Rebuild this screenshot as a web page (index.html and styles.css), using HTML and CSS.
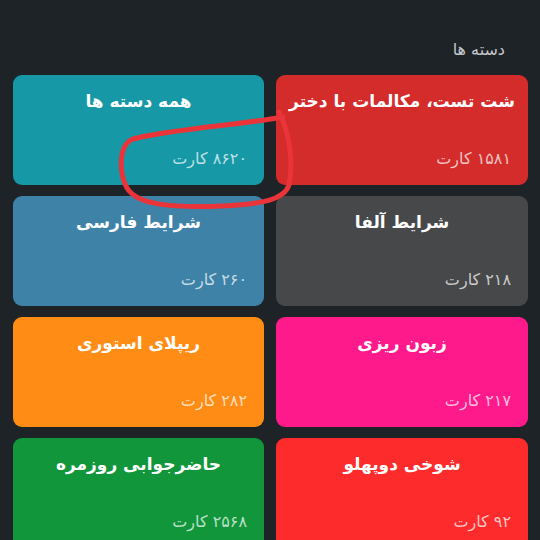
FILE: index.html
```html
<!DOCTYPE html>
<html lang="fa" dir="rtl">
<head>
<meta charset="utf-8">
<link rel="stylesheet" href="styles.css">
</head>
<body>
<div class="page">
  <div class="header">دسته ها</div>
  <div class="grid">
    <div class="card red">
      <div class="title">شت تست، مکالمات با دختر</div>
      <div class="count">۱۵۸۱ کارت</div>
    </div>
    <div class="card teal">
      <div class="title">همه دسته ها</div>
      <div class="count">۸۶۲۰ کارت</div>
    </div>
    <div class="card gray">
      <div class="title">شرایط آلفا</div>
      <div class="count">۲۱۸ کارت</div>
    </div>
    <div class="card blue">
      <div class="title">شرایط فارسی</div>
      <div class="count">۲۶۰ کارت</div>
    </div>
    <div class="card pink">
      <div class="title">زبون ریزی</div>
      <div class="count">۲۱۷ کارت</div>
    </div>
    <div class="card orange">
      <div class="title">ریپلای استوری</div>
      <div class="count">۲۸۲ کارت</div>
    </div>
    <div class="card bright">
      <div class="title">شوخی دوپهلو</div>
      <div class="count">۹۲ کارت</div>
    </div>
    <div class="card green">
      <div class="title">حاضرجوابی روزمره</div>
      <div class="count">۲۵۶۸ کارت</div>
    </div>
  </div>
  <svg class="mark" width="540" height="540" viewBox="0 0 540 540">
    <path d="M283 117 C240 125 170 129 133 139 C118 145 119 173 127 188 C137 205 172 208 222 206 C262 204 284 200 289 185 C293 165 291 136 279 112" fill="none" stroke="#ea3439" stroke-width="5" stroke-linecap="round"/>
  </svg>
</div>
</body>
</html>
```
FILE: styles.css
```css
html, body {
  margin: 0;
  padding: 0;
  background: #1e2328;
  overflow: hidden;
}
.page {
  position: relative;
  width: 540px;
  height: 540px;
  box-sizing: border-box;
  padding: 38px 12px 0 13px;
  font-family: "DejaVu Sans", "Noto Sans", sans-serif;
}
.header {
  color: #c4c7ca;
  font-size: 16px;
  padding-right: 23px;
  height: 37px;
  line-height: 24px;
}
.grid {
  display: grid;
  grid-template-columns: 252px 251px;
  grid-auto-rows: 110px;
  column-gap: 12px;
  row-gap: 11px;
}
.card {
  border-radius: 9px;
  display: flex;
  flex-direction: column;
  justify-content: space-between;
  padding: 13px 10px 15px;
  box-sizing: border-box;
  color: #fff;
}
.title {
  text-align: center;
  font-size: 17px;
  font-weight: bold;
  line-height: 26px;
  white-space: nowrap;
}
.count {
  text-align: right;
  font-size: 16px;
  line-height: 22px;
  padding-right: 7px;
  color: rgba(255, 255, 255, 0.72);
}
.red { background: #d42b2b; }
.teal { background: #1798a6; }
.gray { background: #47484a; }
.blue { background: #3e83a7; }
.pink { background: #fe1a8a; }
.orange { background: #ff8c14; }
.bright { background: #fd2b2b; }
.green { background: #11963b; }
.mark {
  position: absolute;
  left: 0;
  top: 0;
  pointer-events: none;
}
```
